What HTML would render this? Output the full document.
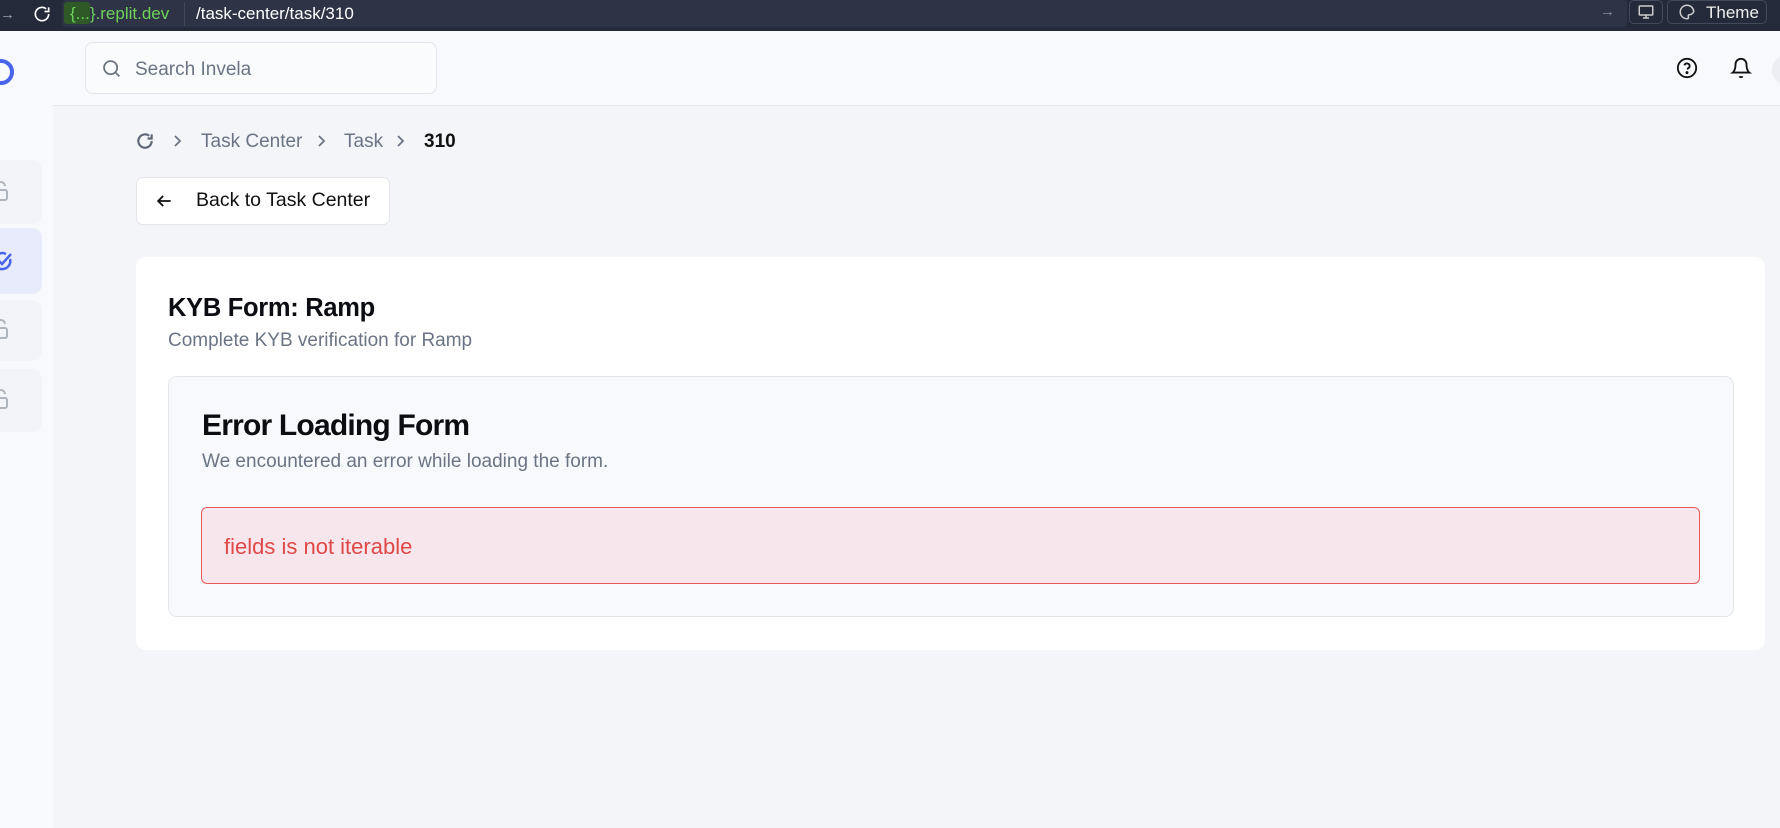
<!DOCTYPE html>
<html><head><meta charset="utf-8"><style>
*{box-sizing:border-box;margin:0;padding:0}
body{width:1780px;height:828px;overflow:hidden;background:#f4f5f9;font-family:"Liberation Sans",sans-serif;position:relative}
.abs{position:absolute}
</style></head><body>
<div class="abs" style="left:0;top:0;width:1780px;height:31px;background:#252a3b"></div>
<div class="abs" style="left:0;top:6px;color:#9aa0b0;font-size:15px">→</div>
<svg class="abs" style="left:32px;top:4px" width="20" height="20" viewBox="0 0 24 24" fill="none" stroke="#fff" stroke-width="2"><path d="M20 12a8 8 0 1 1-3-6.2M20 4v5h-5"/></svg>
<div class="abs" style="left:62px;top:0;width:1565px;height:27px;background:#2e3346;border-radius:4px"></div>
<div class="abs" style="left:64px;top:2px;width:26px;height:22px;background:#2f5a27;border-radius:3px"></div>
<div class="abs" style="left:70px;top:4px;color:#6fd35a;font-size:17px">{...}.replit.dev</div>
<div class="abs" style="left:184px;top:2px;width:1px;height:24px;background:#44495a"></div>
<div class="abs" style="left:196px;top:4px;color:#fff;font-size:17px">/task-center/task/310</div>
<div class="abs" style="left:1600px;top:3px;color:#8a90a0;font-size:15px">→</div>
<div class="abs" style="left:1629px;top:0;width:34px;height:24px;border:1px solid #444a5c;border-radius:5px"></div>
<svg class="abs" style="left:1637px;top:3px" width="18" height="18" viewBox="0 0 24 24" fill="none" stroke="#ccc" stroke-width="2"><rect x="3" y="4" width="18" height="12" rx="1"/><path d="M12 16v4M8 20h8"/></svg>
<div class="abs" style="left:1667px;top:0;width:100px;height:24px;border:1px solid #444a5c;border-radius:5px"></div>
<svg class="abs" style="left:1678px;top:3px" width="18" height="18" viewBox="0 0 24 24" fill="none" stroke="#ccc" stroke-width="2"><path d="M12 3a9 9 0 1 0 0 18c1.5 0 2-1 2-2s-1-2 0-3 3 0 4-1 3-2 3-4a9 9 0 0 0-9-8z"/></svg>
<div class="abs" style="left:1706px;top:3px;color:#eee;font-size:17px">Theme</div>

<div class="abs" style="left:0;top:31px;width:53px;height:797px;background:#f8f9fc"></div>
<div class="abs" style="left:-12px;top:59px;width:26px;height:26px;border:4px solid #4965ec;border-radius:50%"></div>
<div class="abs" style="left:-10px;top:160px;width:52px;height:64px;background:#f3f4f9;border-radius:10px"></div>
<div class="abs" style="left:-10px;top:228px;width:52px;height:66px;background:#e8ebfb;border-radius:10px"></div>
<div class="abs" style="left:-10px;top:300px;width:52px;height:61px;background:#f3f4f9;border-radius:10px"></div>
<div class="abs" style="left:-10px;top:369px;width:52px;height:63px;background:#f3f4f9;border-radius:10px"></div>
<svg class="abs" style="left:-6px;top:178px" width="18" height="26" viewBox="0 0 18 26" fill="none" stroke="#b0b4be" stroke-width="2"><rect x="1" y="12" width="12" height="10" rx="2"/><path d="M3 12V8a4 4 0 0 1 8 0"/></svg>
<svg class="abs" style="left:-6px;top:316px" width="18" height="26" viewBox="0 0 18 26" fill="none" stroke="#b0b4be" stroke-width="2"><rect x="1" y="12" width="12" height="10" rx="2"/><path d="M3 12V8a4 4 0 0 1 8 0"/></svg>
<svg class="abs" style="left:-6px;top:386px" width="18" height="26" viewBox="0 0 18 26" fill="none" stroke="#b0b4be" stroke-width="2"><rect x="1" y="12" width="12" height="10" rx="2"/><path d="M3 12V8a4 4 0 0 1 8 0"/></svg>
<svg class="abs" style="left:-8px;top:250px" width="22" height="22" viewBox="0 0 22 22" fill="none" stroke="#4965ec" stroke-width="2.5"><path d="M18 9a8 8 0 1 1-4-5"/><path d="M7 11l3 3 9-10"/></svg>

<div class="abs" style="left:53px;top:31px;width:1727px;height:75px;background:#f8f9fc;border-bottom:1px solid #e4e6ec"></div>
<div class="abs" style="left:85px;top:42px;width:352px;height:52px;background:#fafbfd;border:1px solid #e3e5ea;border-radius:8px"></div>
<svg class="abs" style="left:101px;top:58px" width="21" height="21" viewBox="0 0 24 24" fill="none" stroke="#6b7280" stroke-width="2"><circle cx="11" cy="11" r="7.5"/><path d="M21 21l-4.5-4.5"/></svg>
<div class="abs" style="left:135px;top:59px;color:#6b7485;font-size:19px">Search Invela</div>
<svg class="abs" style="left:1676px;top:57px" width="22" height="22" viewBox="0 0 24 24" fill="none" stroke="#111" stroke-width="2"><circle cx="12" cy="12" r="10"/><path d="M9.1 9a3 3 0 0 1 5.8 1c0 2-3 3-3 3"/><circle cx="12" cy="17" r=".6" fill="#111"/></svg>
<svg class="abs" style="left:1730px;top:57px" width="22" height="22" viewBox="0 0 24 24" fill="none" stroke="#111" stroke-width="2"><path d="M6 8a6 6 0 0 1 12 0c0 7 3 9 3 9H3s3-2 3-9"/><path d="M10.3 21a1.9 1.9 0 0 0 3.4 0"/></svg>
<div class="abs" style="left:1772px;top:55px;width:30px;height:30px;border-radius:50%;background:#eceef3"></div>

<svg class="abs" style="left:135px;top:131px" width="20" height="20" viewBox="0 0 24 24" fill="none" stroke="#5f6676" stroke-width="2.6"><path d="M20 12a8 8 0 1 1-3-6.2"/><path d="M20 4v5h-5"/></svg>
<svg class="abs" style="left:170px;top:134px" width="14" height="14" viewBox="0 0 14 14" fill="none" stroke="#6b7485" stroke-width="1.8"><path d="M5 2l5 5-5 5"/></svg>
<div class="abs" style="left:201px;top:131px;color:#6b7485;font-size:19px">Task Center</div>
<svg class="abs" style="left:314px;top:134px" width="14" height="14" viewBox="0 0 14 14" fill="none" stroke="#6b7485" stroke-width="1.8"><path d="M5 2l5 5-5 5"/></svg>
<div class="abs" style="left:344px;top:131px;color:#6b7485;font-size:19px">Task</div>
<svg class="abs" style="left:393px;top:134px" width="14" height="14" viewBox="0 0 14 14" fill="none" stroke="#6b7485" stroke-width="1.8"><path d="M5 2l5 5-5 5"/></svg>
<div class="abs" style="left:424px;top:131px;color:#111;font-size:19px;font-weight:bold">310</div>

<div class="abs" style="left:136px;top:177px;width:254px;height:48px;background:#fff;border:1px solid #e3e5ea;border-radius:7px"></div>
<svg class="abs" style="left:154px;top:191px" width="20" height="20" viewBox="0 0 24 24" fill="none" stroke="#111" stroke-width="2.2"><path d="M20 12H5M11 6l-6 6 6 6"/></svg>
<div class="abs" style="left:196px;top:189px;color:#111;font-size:19.5px">Back to Task Center</div>

<div class="abs" style="left:136px;top:257px;width:1629px;height:393px;background:#fff;border-radius:10px"></div>
<div class="abs" style="left:168px;top:294px;color:#0b0d12;font-size:25.5px;font-weight:bold;letter-spacing:-0.3px">KYB Form: Ramp</div>
<div class="abs" style="left:168px;top:330px;color:#6b7485;font-size:19px">Complete KYB verification for Ramp</div>
<div class="abs" style="left:168px;top:376px;width:1566px;height:241px;background:#f8f9fc;border:1px solid #e3e5ea;border-radius:9px"></div>
<div class="abs" style="left:202px;top:409px;color:#0b0d12;font-size:30px;font-weight:bold;letter-spacing:-0.8px">Error Loading Form</div>
<div class="abs" style="left:202px;top:451px;color:#6b7485;font-size:19px">We encountered an error while loading the form.</div>
<div class="abs" style="left:201px;top:507px;width:1499px;height:77px;background:#f7e7ec;border:1px solid #e45a5a;border-radius:6px"></div>
<div class="abs" style="left:224px;top:534px;color:#e04848;font-size:22px">fields is not iterable</div>
</body></html>
